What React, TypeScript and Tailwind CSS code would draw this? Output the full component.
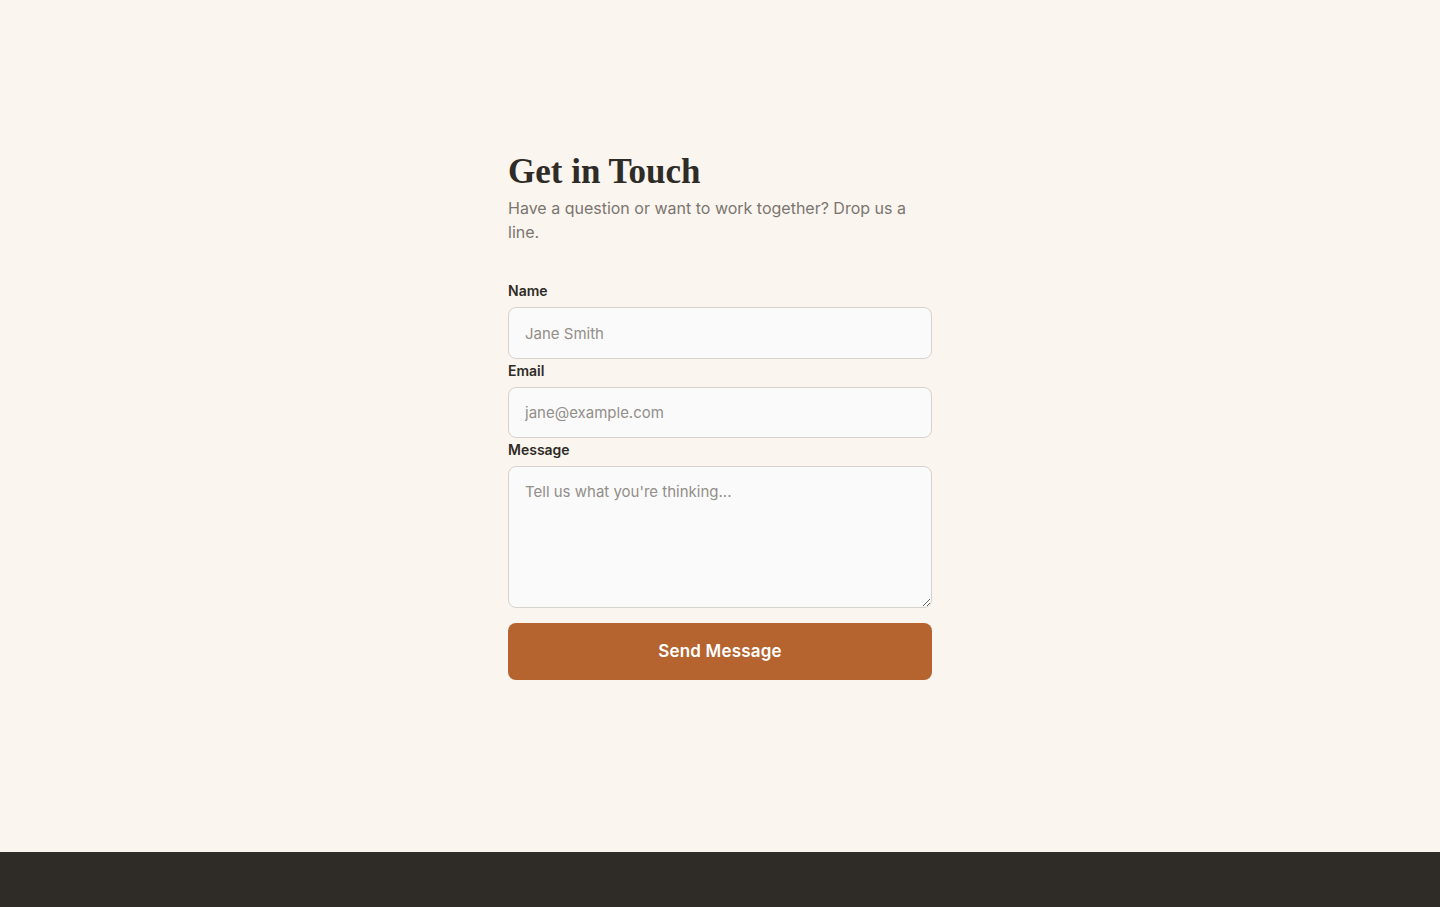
import { useState } from 'react';

function Field({
  label,
  children,
}: {
  label: string;
  children: React.ReactNode;
}) {
  return (
    <div className="flex flex-col">
      <label className="mb-[6px] text-sm leading-5 font-semibold text-[#2f2b26]">{label}</label>
      {children}
    </div>
  );
}

const inputCls =
  'w-full rounded-lg border border-[#d6d2cd] bg-[#fafafa] px-4 text-[15px] text-[#2f2b26] placeholder:text-[#928e89] outline-none focus:border-[#b5632f]';

export default function App() {
  const [name, setName] = useState('');
  const [email, setEmail] = useState('');
  const [message, setMessage] = useState('');

  return (
    <div className="min-h-screen flex flex-col bg-[#faf5ef] font-['Inter','Liberation_Sans',sans-serif]">
      <main className="h-[852px] flex justify-center pt-[150px]">
        <div className="w-[424px]">
          <h1 className="font-['Liberation_Serif','DejaVu_Serif',serif] text-[35px] leading-[44px] font-bold text-[#2f2b26]">
            Get in Touch
          </h1>
          <p className="mt-[2px] text-base leading-6 text-[#7a7570]">
            Have a question or want to work together? Drop us a line.
          </p>

          <form className="mt-[37px] flex flex-col gap-[2px]" onSubmit={(e) => e.preventDefault()}>
            <Field label="Name">
              <input
                className={inputCls + ' h-[52px]'}
                placeholder="Jane Smith"
                value={name}
                onChange={(e) => setName(e.target.value)}
              />
            </Field>
            <Field label="Email">
              <input
                type="email"
                className={inputCls + ' h-[51px]'}
                placeholder="jane@example.com"
                value={email}
                onChange={(e) => setEmail(e.target.value)}
              />
            </Field>
            <Field label="Message">
              <textarea
                className={inputCls + ' block h-[142px] py-[14px] leading-[22px]'}
                placeholder="Tell us what you're thinking..."
                value={message}
                onChange={(e) => setMessage(e.target.value)}
              />
            </Field>
            <button
              type="submit"
              className="mt-[13px] h-[57px] w-full rounded-lg bg-[#b5632f] text-[17px] tracking-[0.2px] font-semibold text-white"
            >
              Send Message
            </button>
          </form>
        </div>
      </main>
      <footer className="h-[200px] bg-[#2f2b26]" />
    </div>
  );
}
